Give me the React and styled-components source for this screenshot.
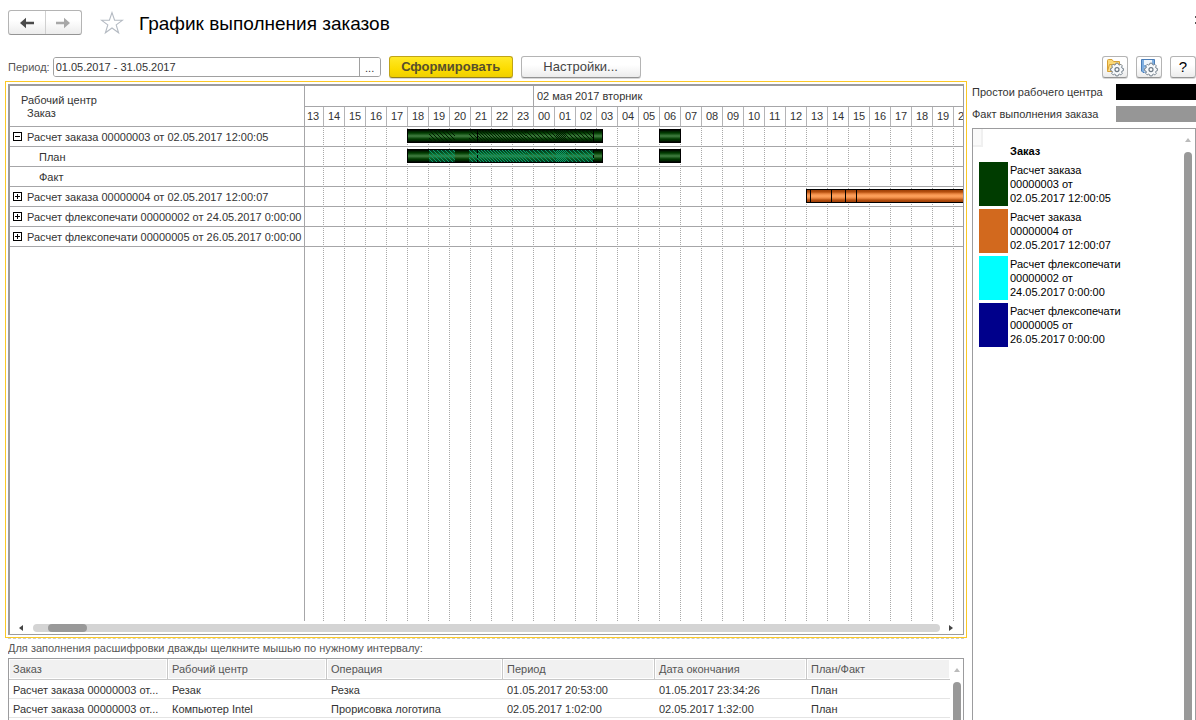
import React from "react";
import styled, { createGlobalStyle, css } from "styled-components";

const LINE = "#a6a6a8";
const FRAME = "#9c9c9e";

const GlobalStyle = createGlobalStyle`
  *, *::before, *::after { box-sizing: border-box; }
  body {
    margin: 0;
    background: #fff;
    color: #333;
    font: 11px/14px "Liberation Sans", Arial, sans-serif;
  }
  button, input { font: inherit; color: inherit; margin: 0; }
`;

const Page = styled.div`
  display: flex;
  flex-direction: column;
  height: 100vh;
  min-height: 480px;
  overflow: hidden;
`;

/* Title bar */

const TitleBar = styled.header`
  display: flex;
  align-items: center;
  height: 45px;
  padding-left: 8px;
`;

const NavGroup = styled.div`
  display: flex;
  width: 74px;
  height: 25px;
  border: 1px solid #b4b4b4;
  border-bottom-color: #949494;
  border-radius: 3px;
  background: linear-gradient(#fff 40%, #ececec);
`;

const NavButton = styled.button`
  flex: 1;
  display: flex;
  align-items: center;
  justify-content: center;
  padding: 0;
  border: 0;
  background: none;
  color: ${(p) => (p.disabled ? "#a8a8a8" : "#4a4a4a")};
  & + & { border-left: 1px solid #d0d0d0; }
`;

const StarButton = styled.button`
  display: flex;
  margin: 0 15px 0 18px;
  padding: 0;
  border: 0;
  background: none;
`;

const Title = styled.h1`
  flex: 1;
  margin: 0;
  padding-top: 2px;
  font-size: 19px;
  line-height: 24px;
  font-weight: 400;
  color: #000;
`;

const MoreButton = styled.button`
  display: flex;
  padding: 0 0 6px;
  border: 0;
  background: none;
`;

/* Command bar */

const CommandBar = styled.form`
  display: flex;
  align-items: center;
  gap: 8px;
  padding: 11px 0 3px 8px;
`;

const PeriodField = styled.div`
  display: flex;
  align-items: center;
  gap: 3px;
  color: #555;
`;

const PeriodBox = styled.div`
  display: flex;
  width: 328px;
  height: 20px;
  border: 1px solid #a0a0a0;
  border-radius: 3px;
  overflow: hidden;
`;

const PeriodInput = styled.input`
  flex: 1;
  min-width: 0;
  padding: 0 2px;
  border: 0;
  outline: 0;
  background: #fff;
  color: #333;
`;

const PickButton = styled.button`
  width: 21px;
  padding: 2px 0 0;
  border: 0;
  border-left: 1px solid #a0a0a0;
  background: #fff;
  color: #333;
`;

const Button = styled.button`
  height: 22px;
  width: ${(p) => p.$width}px;
  display: flex;
  align-items: center;
  justify-content: center;
  padding: 0;
  border: 1px solid #b4b4b4;
  border-bottom-color: #949494;
  border-radius: 3px;
  background: linear-gradient(#fff 40%, #ececec);
  box-shadow: 0 1px 0 #d8d8d8;
  font-size: 13px;
  color: #444;
  ${(p) => p.$primary && css`
    border-color: #c0a417;
    border-bottom-color: #94801c;
    background: linear-gradient(#ffe928, #fcdc00 60%, #efcf00);
    font-weight: 700;
    color: #574f2c;
  `}
`;

const HelpButton = styled(Button)`
  font-size: 15px;
  color: #000;
`;

const Tools = styled.div`
  display: flex;
  gap: 8px;
  margin-left: auto;
`;

/* Work area */

const Workspace = styled.main`
  flex: 1;
  min-height: 0;
  display: grid;
  grid-template-columns: minmax(0, 1fr) 224px;
  gap: 5px;
  padding-left: 5px;
`;

const LeftPane = styled.section`
  display: flex;
  flex-direction: column;
  min-height: 0;
`;

const ChartFocus = styled.div`
  flex: 1;
  min-height: 0;
  display: flex;
  padding: 2px;
  border: 1px solid #fcc926;
`;

const Chart = styled.div`
  flex: 1;
  min-width: 0;
  display: flex;
  flex-direction: column;
  border: 1px solid ${FRAME};
  border-top-width: 2px;
  border-left-width: 2px;
`;

const ChartBody = styled.div`
  flex: 1;
  min-height: 0;
  display: grid;
  grid-template-columns: 295px minmax(0, 1fr);
`;

const Names = styled.div`
  border-right: 1px solid ${LINE};
`;

const NamesHead = styled.div`
  height: 41px;
  padding: 8px 0 0 11px;
  line-height: 13px;
  border-bottom: 1px solid ${LINE};
`;

const Indented = styled.div`
  padding-left: 6px;
`;

const NameRow = styled.div`
  display: flex;
  align-items: center;
  gap: 5px;
  height: 20px;
  padding-left: ${(p) => (p.$child ? 29 : 3)}px;
  border-bottom: 1px solid ${LINE};
  white-space: nowrap;
`;

const Toggle = styled.button`
  display: flex;
  padding: 0;
  border: 0;
  background: #fff;
`;

const Timeline = styled.div`
  display: flex;
  flex-direction: column;
  overflow: hidden;
`;

const Days = styled.div`
  display: flex;
  height: 21px;
  border-bottom: 1px solid ${LINE};
`;

const Day = styled.div`
  flex: none;
  width: ${(p) => p.$width}px;
  padding: 3px 3px 0;
  border-right: 1px solid ${LINE};
`;

const Hours = styled.div`
  display: flex;
  height: 20px;
  border-bottom: 1px solid ${LINE};
`;

const Hour = styled.div`
  flex: none;
  width: 21px;
  padding: 2px 0 0 4px;
  border-right: 1px solid #b4b4b6;
  &:first-child { width: 19px; padding-left: 2px; }
`;

const Lanes = styled.div`
  flex: 1;
  background-image:
    linear-gradient(#fff 1px, transparent 1px),
    linear-gradient(90deg, #a8a8a8 1px, transparent 1px);
  background-size: 100% 2px, 21px 100%;
  background-position: 0 0, 18px 0;
`;

const Lane = styled.div`
  display: flex;
  height: 20px;
  padding-top: 2px;
  border-bottom: 1px solid ${LINE};
`;

const barFill = {
  green: "linear-gradient(#000 1px, #001c00 2px, #003d00 4px, #2c682c 6px, #417f41 7px, #2c682c 8px, #003d00 10px, #001c00 12px, #000 13px)",
  orange: "linear-gradient(#000 1px, #9e3f08 1px, #b5500f 3px, #ee8a45 5px, #ffa45f 7px, #ee8a45 9px, #b5500f 11px, #9e3f08 13px, #000 13px)",
};

const Bar = styled.div`
  flex: none;
  display: flex;
  width: ${(p) => p.$width}px;
  height: 14px;
  margin-left: ${(p) => p.$gap}px;
  border: solid #000;
  border-width: 0 1px;
  background: ${(p) => barFill[p.$fill]};
`;

const ChartScroll = styled.div`
  display: flex;
  align-items: center;
  gap: 9px;
  height: 13px;
  padding: 1px 8px 0 8px;
`;

const Track = styled.div`
  flex: 1;
  height: 8px;
  padding-left: 15px;
  border-radius: 4px;
  background: #d4d4d4;
`;

const Thumb = styled.div`
  width: 39px;
  height: 8px;
  border-radius: 4px;
  background: #999;
`;

/* Detail table */

const Detail = styled.div`
  flex: none;
  display: flex;
  flex-direction: column;
  height: 82px;
  margin: 0 3px;
  border-top: 1px dashed #ccc;
  overflow: hidden;
`;

const Hint = styled.p`
  margin: 0;
  padding: 2px 0 3px;
  color: #555;
`;

const DetailFrame = styled.div`
  flex: 1;
  display: flex;
  border: 1px solid ${FRAME};
  border-bottom: 0;
`;

const DetailTable = styled.table`
  flex: 1;
  width: 100%;
  align-self: flex-start;
  table-layout: fixed;
  border-collapse: separate;
  border-spacing: 0;
`;

const HeadCell = styled.th`
  width: ${(p) => p.$width}px;
  height: 21px;
  padding: 0 4px;
  border: 1px solid #c8c8c8;
  border-width: 0 1px 1px 0;
  background: #f1f1f1;
  box-shadow: inset 0 0 0 1px #fff;
  font-weight: 400;
  text-align: left;
  color: #555;
  &:last-child { border-right: 0; }
`;

const Cell = styled.td`
  height: 19px;
  padding: 1px 4px 0;
  border-bottom: 1px solid #e4e4e4;
  white-space: nowrap;
`;

/* Legend */

const RightPane = styled.aside`
  display: flex;
  flex-direction: column;
  gap: 6px;
  min-height: 0;
  padding-top: 3px;
`;

const Marks = styled.div`
  display: flex;
  flex-direction: column;
  gap: 6px;
`;

const Mark = styled.div`
  display: flex;
  align-items: center;
  justify-content: space-between;
  height: 16px;
  white-space: nowrap;
`;

const MarkColor = styled.span`
  width: 80px;
  height: 16px;
  background: ${(p) => p.$color};
`;

const Legend = styled.div`
  flex: 1;
  min-height: 0;
  display: flex;
  border: 1px solid ${FRAME};
  border-bottom: 0;
  color: #000;
  overflow: hidden;
`;

const Corner = styled.div`
  width: 10px;
  height: 18px;
  border: 2px solid #f0f0f0;
  border-width: 0 2px 2px 0;
  background: #fafafa;
`;

const LegendList = styled.div`
  flex: 1;
`;

const LegendTitle = styled.h2`
  margin: -3px 0 3px 37px;
  font-size: 11px;
  line-height: 15px;
`;

const Items = styled.ul`
  display: flex;
  flex-direction: column;
  gap: 3px;
  margin: 0;
  padding: 0 0 0 6px;
  list-style: none;
`;

const Item = styled.li`
  display: flex;
  gap: 2px;
  height: 44px;
`;

const ItemColor = styled.span`
  flex: none;
  width: 29px;
  background: ${(p) => p.$color};
`;

const ItemText = styled.span`
  padding-top: 1px;
  white-space: pre-line;
  flex: none;
`;

const VScroll = styled.div`
  display: flex;
  flex-direction: column;
  align-items: center;
  gap: 9px;
  width: ${(p) => p.$width}px;
  padding-top: 8px;
`;

const VThumb = styled.div`
  flex: 1;
  width: 8px;
  border-radius: 4px 4px 0 0;
  background: #999;
`;

/* Drawings */

const Arrow = ({ flip }) => (
  <svg width="16" height="12" viewBox="0 0 16 12" aria-hidden="true">
    <path d={flip ? "M15 6 L9 0.8 V4.7 H1 V7.3 H9 V11.2 Z" : "M1 6 L7 0.8 V4.7 H15 V7.3 H7 V11.2 Z"} fill="currentColor" />
  </svg>
);

const Star = () => (
  <svg width="24" height="24" viewBox="0 0 24 24" aria-hidden="true">
    <path d="M12 1.6 L14.6 9.2 H22.6 L16.2 13.9 L18.6 21.8 L12 17 L5.4 21.8 L7.8 13.9 L1.4 9.2 H9.4 Z" fill="#fff" stroke="#b4bac2" strokeWidth="1.1" />
  </svg>
);

const Gear = () => (
  <g>
    <path
      d="M10.9 6.2h2.2l.4 1.4 1 .4 1.3-.7 1.5 1.5-.7 1.3.4 1 1.4.4v2.2l-1.4.4-.4 1 .7 1.3-1.5 1.5-1.3-.7-1 .4-.4 1.3h-2.2l-.4-1.3-1-.4-1.3.7-1.5-1.5.7-1.3-.4-1-1.4-.4v-2.2l1.4-.4.4-1-.7-1.3 1.5-1.5 1.3.7 1-.4z"
      fill="#f6f8fa"
      stroke="#76828e"
      strokeWidth="1"
      strokeLinejoin="round"
    />
    <circle cx="12" cy="12.6" r="2" fill="#fff" stroke="#6c7884" strokeWidth="1.2" />
  </g>
);

const FolderGear = () => (
  <svg width="20" height="20" viewBox="0 0 20 20" aria-hidden="true">
    <path d="M2.5 13.5 V3.5 Q2.5 2.5 3.5 2.5 H7 L8.5 4.5 H14.5 V7" fill="#fbd877" stroke="#d8a032" />
    <path d="M2.5 14 L4.5 7.5 H16 L14 14.5 H2.5 Z" fill="#ffe08a" stroke="#d8a032" />
    <Gear />
  </svg>
);

const DiskGear = () => (
  <svg width="20" height="20" viewBox="0 0 20 20" aria-hidden="true">
    <path d="M2.5 2.5 H15.5 V15.5 H4 L2.5 14 Z" fill="#7eaee0" stroke="#4a7db8" />
    <rect x="5" y="3" width="8" height="5" fill="#eef5fc" />
    <rect x="5" y="10.5" width="7" height="5" fill="#c9dcf0" />
    <Gear />
  </svg>
);

const MoreDots = () => (
  <svg width="2" height="10" viewBox="0 0 2 10" aria-hidden="true">
    <rect x="1" y="1" width="1" height="2" fill="#555" />
    <rect x="1" y="7" width="1" height="2" fill="#555" />
  </svg>
);

const Box = ({ open }) => (
  <svg width="9" height="9" viewBox="0 0 9 9" shapeRendering="crispEdges" aria-hidden="true">
    <path d={`M0.5 0.5 H8.5 V8.5 H0.5 Z M2 4.5 H7 ${open ? "" : "M4.5 2 V7"}`} fill="#fff" stroke="#000" />
  </svg>
);

const tips = {
  left: "M5 0 V6 L1 3 Z",
  right: "M0 0 V6 L4 3 Z",
  up: "M0 5 H6 L3 1 Z",
};

const Tip = ({ to, color = "#444" }) => (
  <svg width="6" height="6" viewBox="0 0 6 6" aria-hidden="true">
    <path d={tips[to]} fill={color} />
  </svg>
);

const Hatch = ({ id, color, glow }) => (
  <svg width="194" height="14" viewBox="0 0 194 14" shapeRendering="crispEdges" aria-hidden="true">
    <defs>
      <pattern id={`${id}-diag`} width="4" height="4" patternUnits="userSpaceOnUse">
        <path d="M0 0h1v1h-1z M1 1h1v1h-1z M2 2h1v1h-1z M3 3h1v1h-1z" fill={color} />
      </pattern>
      <pattern id={`${id}-close`} width="3" height="3" patternUnits="userSpaceOnUse">
        <path d="M0 0h1v1h-1z M1 1h1v1h-1z M2 2h1v1h-1z" fill={color} />
      </pattern>
      <pattern id={`${id}-dense`} width="2" height="2" patternUnits="userSpaceOnUse">
        <path d="M0 0h1v1h-1z M1 1h1v1h-1z" fill={color} />
      </pattern>
    </defs>
    <path d="M21 1 H47 V13 H21 Z M61 1 H186 V13 H61 Z" fill={color} opacity={glow} />
    <rect x="21" y="1" width="26" height="12" fill={`url(#${id}-diag)`} />
    <rect x="61" y="1" width="9" height="12" fill={`url(#${id}-diag)`} />
    <rect x="70" y="1" width="48" height="12" fill={`url(#${id}-close)`} />
    <rect x="118" y="1" width="68" height="12" fill={`url(#${id}-diag)`} />
    <rect x="148" y="1" width="10" height="12" fill={`url(#${id}-dense)`} />
    <path d="M69.5 1 V13 M185.5 1 V13" stroke="#000" strokeDasharray={glow ? "3 2" : undefined} />
  </svg>
);

const OrangeTicks = () => (
  <svg width="60" height="14" viewBox="0 0 60 14" shapeRendering="crispEdges" aria-hidden="true">
    <path d="M3.5 0 V14 M24.5 0 V14 M38.5 0 V14 M49.5 0 V14" stroke="#000" />
  </svg>
);

/* Data */

const hours = Array.from({ length: 32 }, (_, i) => String((13 + i) % 24).padStart(2, "0"));

const orderBars = (id, color, glow) => [
  { gap: 102, width: 196, fill: "green", art: <Hatch id={id} color={color} glow={glow} /> },
  { gap: 56, width: 22, fill: "green" },
];

const rows = [
  { name: "Расчет заказа 00000003 от 02.05.2017 12:00:05", open: true, bars: orderBars("order", "#001800", 0) },
  { name: "План", child: true, bars: orderBars("plan", "#0a9a6a", 0.3) },
  { name: "Факт", child: true, bars: [] },
  { name: "Расчет заказа 00000004 от 02.05.2017 12:00:07", bars: [{ gap: 501, width: 400, fill: "orange", art: <OrangeTicks /> }] },
  { name: "Расчет флексопечати 00000002 от 24.05.2017 0:00:00", bars: [] },
  { name: "Расчет флексопечати 00000005 от 26.05.2017 0:00:00", bars: [] },
];

const columns = [
  ["Заказ", 159],
  ["Рабочий центр", 159],
  ["Операция", 176],
  ["Период", 152],
  ["Дата окончания", 152],
  ["План/Факт", 143],
];

const details = [
  ["Расчет заказа 00000003 от...", "Резак", "Резка", "01.05.2017 20:53:00", "01.05.2017 23:34:26", "План"],
  ["Расчет заказа 00000003 от...", "Компьютер Intel", "Прорисовка логотипа", "02.05.2017 1:02:00", "02.05.2017 1:32:00", "План"],
];

const legend = [
  ["#003c00", "Расчет заказа\n00000003 от\n02.05.2017 12:00:05"],
  ["#d2691e", "Расчет заказа\n00000004 от\n02.05.2017 12:00:07"],
  ["#00ffff", "Расчет флексопечати\n00000002 от\n24.05.2017 0:00:00"],
  ["#00008b", "Расчет флексопечати\n00000005 от\n26.05.2017 0:00:00"],
];

export default function App() {
  return (
    <Page>
      <GlobalStyle />
      <TitleBar>
        <NavGroup>
          <NavButton type="button" aria-label="Назад"><Arrow /></NavButton>
          <NavButton type="button" aria-label="Вперед" disabled><Arrow flip /></NavButton>
        </NavGroup>
        <StarButton type="button" aria-label="В избранное"><Star /></StarButton>
        <Title>График выполнения заказов</Title>
        <MoreButton type="button" aria-label="Еще"><MoreDots /></MoreButton>
      </TitleBar>

      <CommandBar onSubmit={(e) => e.preventDefault()}>
        <PeriodField>
          <label htmlFor="period">Период:</label>
          <PeriodBox>
            <PeriodInput id="period" defaultValue="01.05.2017 - 31.05.2017" />
            <PickButton type="button" aria-label="Выбрать период">...</PickButton>
          </PeriodBox>
        </PeriodField>
        <Button type="submit" $primary $width={124}>Сформировать</Button>
        <Button type="button" $width={120}>Настройки...</Button>
        <Tools>
          <Button type="button" $width={26} aria-label="Выбрать вариант"><FolderGear /></Button>
          <Button type="button" $width={26} aria-label="Сохранить вариант"><DiskGear /></Button>
          <HelpButton type="button" $width={26}>?</HelpButton>
        </Tools>
      </CommandBar>

      <Workspace>
        <LeftPane>
          <ChartFocus>
            <Chart>
              <ChartBody>
                <Names>
                  <NamesHead>
                    <div>Рабочий центр</div>
                    <Indented>Заказ</Indented>
                  </NamesHead>
                  {rows.map((row) => (
                    <NameRow key={row.name} $child={row.child}>
                      {!row.child && (
                        <Toggle type="button" aria-label={row.name} aria-expanded={!!row.open}><Box open={row.open} /></Toggle>
                      )}
                      <span>{row.name}</span>
                    </NameRow>
                  ))}
                </Names>
                <Timeline>
                  <Days>
                    <Day $width={229} />
                    <Day $width={504}>02 мая 2017 вторник</Day>
                  </Days>
                  <Hours>
                    {hours.map((hour, i) => <Hour key={i}>{hour}</Hour>)}
                  </Hours>
                  <Lanes>
                    {rows.map((row) => (
                      <Lane key={row.name}>
                        {row.bars.map((bar) => (
                          <Bar key={bar.gap} $gap={bar.gap} $width={bar.width} $fill={bar.fill}>{bar.art}</Bar>
                        ))}
                      </Lane>
                    ))}
                  </Lanes>
                </Timeline>
              </ChartBody>
              <ChartScroll>
                <Tip to="left" />
                <Track><Thumb /></Track>
                <Tip to="right" />
              </ChartScroll>
            </Chart>
          </ChartFocus>

          <Detail>
            <Hint>Для заполнения расшифровки дважды щелкните мышью по нужному интервалу:</Hint>
            <DetailFrame>
              <DetailTable>
                <thead>
                  <tr>{columns.map(([name, width]) => <HeadCell key={name} $width={width}>{name}</HeadCell>)}</tr>
                </thead>
                <tbody>
                  {details.map((line, i) => (
                    <tr key={i}>{line.map((value, j) => <Cell key={j}>{value}</Cell>)}</tr>
                  ))}
                </tbody>
              </DetailTable>
              <VScroll $width={13}><Tip to="up" color="#bbb" /><VThumb /></VScroll>
            </DetailFrame>
          </Detail>
        </LeftPane>

        <RightPane>
          <Marks>
            <Mark>Простои рабочего центра<MarkColor $color="#000" /></Mark>
            <Mark>Факт выполнения заказа<MarkColor $color="#969696" /></Mark>
          </Marks>
          <Legend>
            <LegendList>
              <Corner />
              <LegendTitle>Заказ</LegendTitle>
              <Items>
                {legend.map(([color, text]) => (
                  <Item key={color}><ItemColor $color={color} /><ItemText>{text}</ItemText></Item>
                ))}
              </Items>
            </LegendList>
            <VScroll $width={14}><Tip to="up" color="#bbb" /><VThumb /></VScroll>
          </Legend>
        </RightPane>
      </Workspace>
    </Page>
  );
}
